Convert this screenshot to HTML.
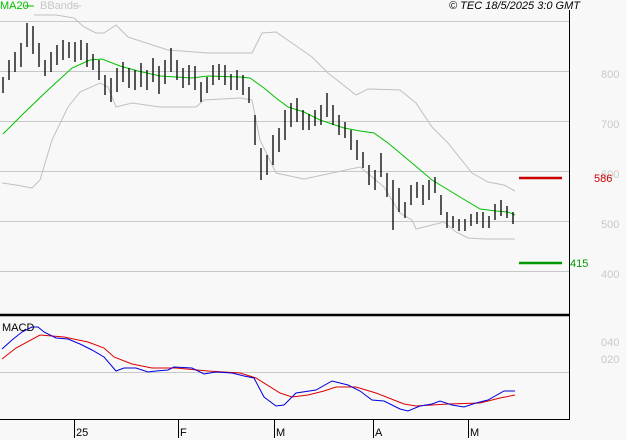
<!DOCTYPE html>
<html><head><meta charset="utf-8"><style>
html,body{margin:0;padding:0;background:#f8f8f8;}
body{width:627px;height:440px;overflow:hidden;position:relative;font-family:"Liberation Sans",sans-serif;}
.t{position:absolute;font-size:11px;line-height:12px;white-space:nowrap;}
.g{color:#c8c8c8;}
</style></head><body>
<svg width="627" height="440" style="position:absolute;left:0;top:0" xmlns="http://www.w3.org/2000/svg">
<g stroke="#c8c8c8" stroke-width="1">
<line x1="0" y1="21.5" x2="569" y2="21.5"/><line x1="0" y1="71.5" x2="569" y2="71.5"/>
<line x1="0" y1="121.5" x2="569" y2="121.5"/><line x1="0" y1="171.5" x2="569" y2="171.5"/>
<line x1="0" y1="221.5" x2="569" y2="221.5"/><line x1="0" y1="271.5" x2="569" y2="271.5"/>
<line x1="0" y1="372.5" x2="569" y2="372.5"/>
</g>
<g fill="none" stroke="#c0c0c0" stroke-width="1">
<polyline points="2,183 16,185 32,188 40,180 52,140 68,107 80,92 100,83 108,87 116,107 132,103 160,107 196,107 204,100 240,98 252,100 256,120 260,140 276,173 304,179 332,173 360,167 384,187 400,213 412,220 416,229 432,225 444,222 456,232 468,238 484,239 515,239"/>
<polyline points="34,15 56,15 74,18 84,27 96,33 104,33 116,25 128,37 168,50 208,53 252,53 262,33 276,32 292,43 312,57 328,73 356,95 368,89 400,90 416,103 432,127 448,143 472,173 488,182 504,185 515,191"/>
</g>
<polyline fill="none" stroke="#00c000" stroke-width="1" points="3,134 24,113 48,90 72,68 90,60 102,59 120,66 138,71 160,76 176,77 192,78 208,76 240,77 250,78 264,88 276,98 288,107 304,112 320,120 344,128 360,131 374,133 388,143 412,163 432,180 460,197 480,209 496,211 508,212 515,215"/>
<path fill="none" stroke="#000" stroke-width="1.3" d="M3 77V93M9 60V80M15 52V72M21 43V67M27 23V47M33 26V54M39 43V67M45 60V76M51 52V72M57 45V65M63 40V60M69 42V58M75 42V62M81 40V60M87 43V67M93 54V70M99 60V80M105 75V95M111 78V102M117 68V92M123 62V82M129 68V88M135 70V90M141 63V87M147 70V90M153 58V82M159 66V94M165 60V84M171 48V72M177 60V80M183 68V88M189 65V85M195 66V90M201 82V102M207 77V93M213 65V85M219 64V80M225 65V85M231 74V90M237 70V90M243 75V95M249 87V103M255 115V145M261 148V180M267 155V175M273 135V165M279 128V152M285 110V140M291 103V127M297 98V122M303 110V130M309 114V130M315 110V126M321 105V125M327 93V117M333 105V125M339 115V135M345 122V138M351 130V150M357 140V160M363 152V168M369 165V185M375 170V190M381 153V177M387 173V197M393 180V230M399 188V212M405 202V218M411 185V205M417 182V198M423 185V205M429 180V200M435 177V193M441 195V215M447 212V228M453 216V228M459 219V231M465 219V231M471 214V226M477 212V224M483 212V228M489 216V228M495 204V220M501 200V216M507 206V218M513 212V224"/>
<line x1="569.5" y1="10" x2="569.5" y2="420" stroke="#000" stroke-width="1"/>
<line x1="0" y1="315" x2="570" y2="315" stroke="#000" stroke-width="2.5"/>
<line x1="0" y1="419.5" x2="570" y2="419.5" stroke="#000" stroke-width="1"/>
<g stroke="#000" stroke-width="1">
<line x1="74.5" y1="419" x2="74.5" y2="438"/><line x1="178.5" y1="419" x2="178.5" y2="438"/>
<line x1="274.5" y1="419" x2="274.5" y2="438"/><line x1="373.5" y1="419" x2="373.5" y2="438"/>
<line x1="468.5" y1="419" x2="468.5" y2="438"/>
</g>
<line x1="519" y1="178" x2="562" y2="178" stroke="#cc0000" stroke-width="2.5"/>
<line x1="519" y1="263" x2="562" y2="263" stroke="#009900" stroke-width="2.5"/>
<polyline fill="none" stroke="#dd0000" stroke-width="1" points="2,359 16,348 40,335 64,337 88,342 104,348 114,357 132,364 152,368 176,368 208,371 240,373 256,378 280,393 292,397 308,395 324,391 336,387 356,387 376,393 404,404 416,406 432,405 448,404 480,403 500,398 515,395"/>
<polyline fill="none" stroke="#0000dd" stroke-width="1" points="2,349 12,340 22,332 32,327 38,327 44,332 56,338 68,339 80,344 92,350 104,357 116,371 124,368 136,368 148,372 156,371 168,370 174,367 192,368 204,374 216,372 232,373 244,376 254,378 264,397 276,406 284,405 296,393 316,390 332,381 348,385 360,391 372,400 384,401 400,409 408,411 420,406 432,404 440,401 452,405 464,407 476,403 488,400 504,391 515,391"/>
<line x1="25" y1="6" x2="34" y2="6" stroke="#00c000"/>
<line x1="73" y1="6" x2="81" y2="6" stroke="#c8c8c8"/>
</svg>
<div class="t" style="left:0;top:0;color:#00c000">MA20</div>
<div class="t" style="left:40px;top:0;color:#c8c8c8">BBands</div>
<div class="t" style="left:449px;top:0;font-style:italic;color:#000">© TEC 18/5/2025 3:0 GMT</div>
<div class="t g" style="left:601px;top:69px">800</div>
<div class="t g" style="left:601px;top:119px">700</div>
<div class="t g" style="left:601px;top:169px">600</div>
<div class="t g" style="left:601px;top:219px">500</div>
<div class="t g" style="left:601px;top:269px">400</div>
<div class="t" style="left:594px;top:173px;color:#cc0000">586</div>
<div class="t" style="left:570px;top:258px;color:#009900">415</div>
<div class="t g" style="left:601px;top:337px">040</div>
<div class="t g" style="left:601px;top:354px">020</div>
<div class="t" style="left:2px;top:322px;color:#000">MACD</div>
<div class="t" style="left:76px;top:427px">25</div>
<div class="t" style="left:180px;top:427px">F</div>
<div class="t" style="left:276px;top:427px">M</div>
<div class="t" style="left:375px;top:427px">A</div>
<div class="t" style="left:470px;top:427px">M</div>
</body></html>
